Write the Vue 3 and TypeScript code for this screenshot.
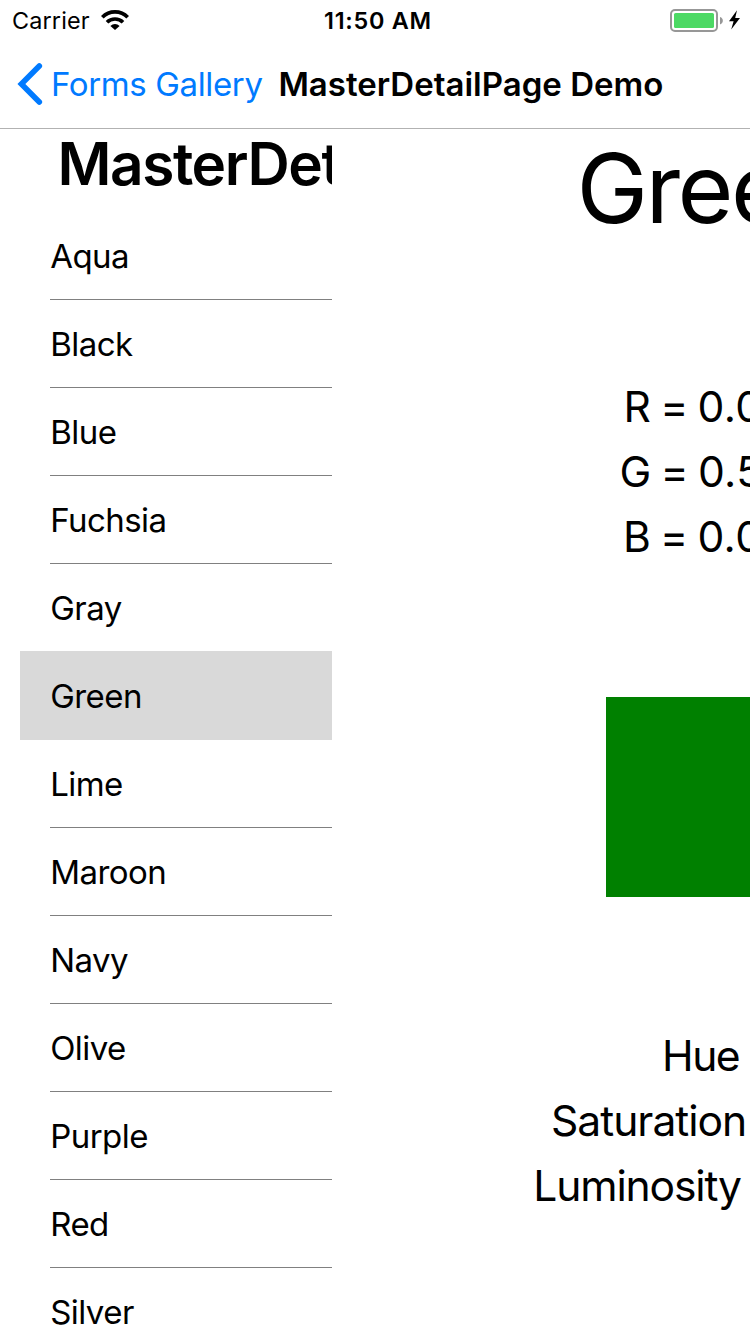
<script setup lang="ts">
interface Line {
  text: string
  key: string
}

const selected = 'Green'
const colors: string[] = [
  'Aqua', 'Black', 'Blue', 'Fuchsia', 'Gray', 'Green', 'Lime',
  'Maroon', 'Navy', 'Olive', 'Purple', 'Red', 'Silver',
]
const rgb: Line[] = [
  { key: 'r', text: 'R = 0.00' },
  { key: 'g', text: 'G = 0.50' },
  { key: 'b', text: 'B = 0.00' },
]
const hsl: Line[] = [
  { key: 'hue', text: 'Hue' },
  { key: 'sat', text: 'Saturation' },
  { key: 'lum', text: 'Luminosity' },
]
</script>

<template>
  <div class="screen">
    <header class="top">
      <div class="status">
        <div class="side">
          <span class="carrier">Carrier</span>
          <svg class="wifi" width="28" height="20" viewBox="0 0 28 20">
            <g fill="none" stroke="#000" stroke-width="3.7">
              <path d="M1.3 7.3 C8.2 0.1 19.8 0.1 26.7 7.3" />
              <path d="M6 12.2 C10.4 7.9 17.6 7.9 22 12.2" />
            </g>
            <path d="M9.4 15.9 C12 13.2 16 13.2 18.6 15.9 L14 20 Z" fill="#000" />
          </svg>
        </div>
        <span class="time">11:50 AM</span>
        <div class="side right">
          <svg width="72" height="24" viewBox="0 0 72 24">
            <rect x="1" y="1" width="46" height="21" rx="4" fill="none" stroke="#979797" stroke-width="2" />
            <rect x="4" y="4" width="40" height="15" rx="1.6" fill="#4cd964" />
            <path d="M50 8 C53.8 9.2 53.8 14.2 50 15.4 Z" fill="#979797" />
            <path d="M67 1.2 L59 12.3 L63.6 12.3 L61.2 20.6 L70 9 L65.2 9 Z" fill="#000" />
          </svg>
        </div>
      </div>
      <nav class="nav">
        <svg class="chevron" width="26" height="44" viewBox="0 0 26 44">
          <path d="M22.3 4 L4.4 22 L22.3 40" fill="none" stroke="#007aff" stroke-width="5.6" stroke-linecap="round" stroke-linejoin="miter" />
        </svg>
        <span class="back">Forms Gallery</span>
        <span class="title">MasterDetailPage Demo</span>
      </nav>
    </header>
    <main class="body">
      <aside class="master">
        <h1 class="heading">MasterDetailPage</h1>
        <ul class="list">
          <li v-for="c in colors" :key="c" :class="['row', { active: c === selected }]">{{ c }}</li>
        </ul>
      </aside>
      <section class="detail">
        <div class="name">Green</div>
        <div class="group rgb">
          <div v-for="l in rgb" :key="l.key" :class="l.key">{{ l.text }}</div>
        </div>
        <div class="swatch"></div>
        <div class="group">
          <div v-for="l in hsl" :key="l.key" :class="l.key">{{ l.text }}</div>
        </div>
      </section>
    </main>
  </div>
</template>

<style>
body {
  margin: 0;
  background: #fff;
}
</style>

<style scoped>
.screen {
  width: 750px;
  height: 1334px;
  overflow: hidden;
  display: flex;
  flex-direction: column;
  background: #fff;
  color: #000;
  font-family: Inter, "Liberation Sans", sans-serif;
  font-feature-settings: "calt" 0;
  white-space: nowrap;
}
.top {
  flex: none;
  height: 128px;
  border-bottom: 1px solid #b2b2b2;
}
.status {
  display: grid;
  grid-template-columns: 324px 1fr 90px;
  height: 40px;
  line-height: 41px;
  font-size: 23.4px;
}
.side {
  display: flex;
  padding-left: 12px;
}
.carrier {
  width: 89px;
  letter-spacing: 0.15px;
}
.wifi {
  margin-top: 10px;
}
.time {
  font-weight: 600;
  letter-spacing: 0.75px;
}
.right {
  padding: 9px 0 0 10px;
}
.nav {
  display: flex;
  height: 88px;
  line-height: 88px;
  font-size: 33px;
}
.chevron {
  margin: 22px 8px 0 17px;
}
.back {
  width: 227.4px;
  color: #007aff;
  letter-spacing: -0.37px;
}
.title {
  font-weight: 600;
}
.body {
  flex: 1;
  min-height: 0;
  display: flex;
}
.master {
  flex: none;
  width: 332px;
  overflow: hidden;
}
.heading {
  margin: 0 0 13px 57.4px;
  font-size: 58.5px;
  font-weight: 600;
  line-height: 70px;
  letter-spacing: -1.4px;
}
.list {
  margin: 0;
  padding: 0 0 0 20px;
  list-style: none;
}
.row {
  height: 88px;
  line-height: 88px;
  font-size: 33px;
  letter-spacing: -0.55px;
  padding-left: 30.2px;
  background: linear-gradient(#808080, #808080) 30px 87px / 100% 1px no-repeat;
}
.row:has(+ .active) {
  background: linear-gradient(#d9d9d9, #d9d9d9) 0 87px / 100% 1px no-repeat;
}
.row.active {
  background: #d9d9d9;
}
.detail {
  flex: 1;
  min-width: 0;
  overflow: hidden;
}
.name {
  margin-left: 244.6px;
  line-height: 118px;
  font-size: 96px;
  letter-spacing: -2.6px;
}
.group {
  margin-top: 127px;
  line-height: 65px;
  font-size: 42.6px;
}
.rgb {
  letter-spacing: 0.4px;
  word-spacing: -3.6px;
}
.swatch {
  margin: 128px 0 -1px 274px;
  height: 200px;
  background: #008000;
}
.r { margin-left: 291.6px; }
.g { margin-left: 287.6px; }
.b { margin-left: 291px; }
.hue { margin-left: 330px; letter-spacing: -1.5px; }
.sat { margin-left: 219px; letter-spacing: -1px; }
.lum { margin-left: 201.3px; letter-spacing: -1.15px; }
</style>
